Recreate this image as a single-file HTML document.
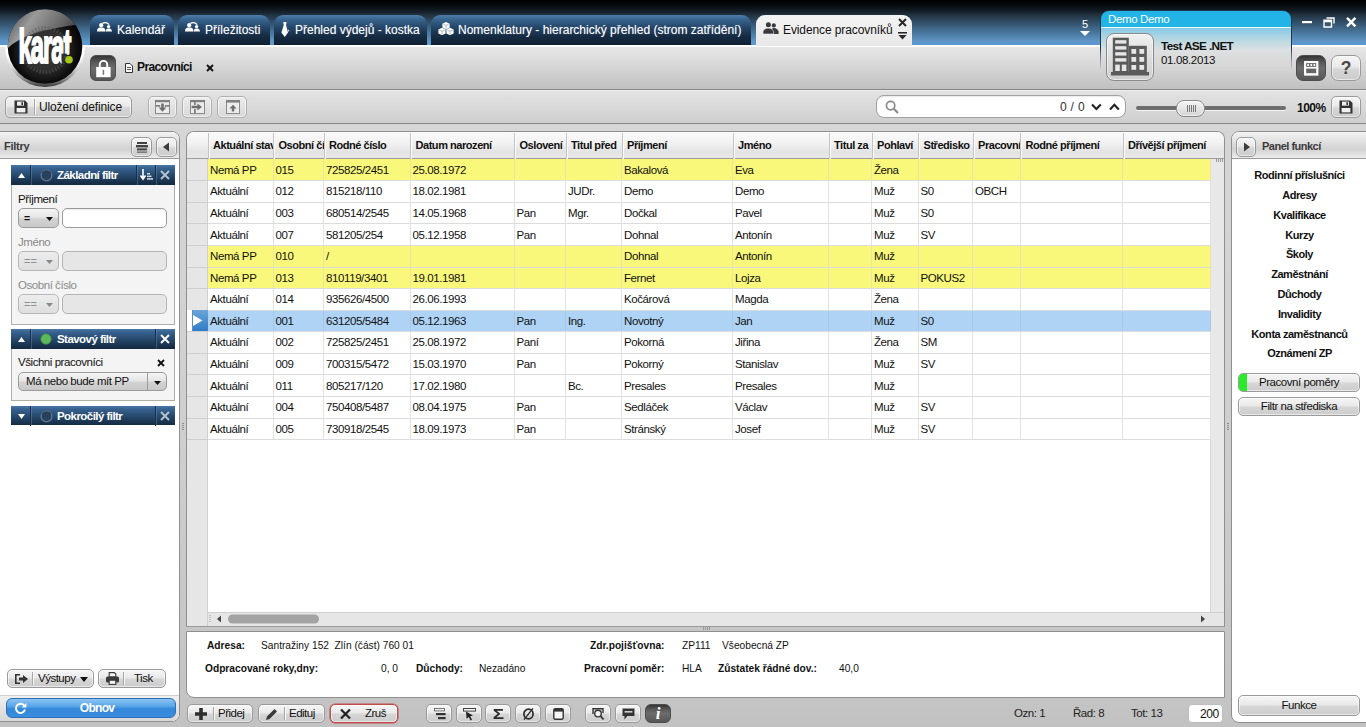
<!DOCTYPE html>
<html lang="cs">
<head>
<meta charset="utf-8">
<title>Evidence pracovníků</title>
<style>
*{box-sizing:border-box;margin:0;padding:0}
html,body{width:1366px;height:727px;overflow:hidden}
body{position:relative;background:linear-gradient(#d6d6d6 0,#d6d6d6 124px,#cfcfcf 420px,#c4c4c4 700px,#c2c2c2 727px);font-family:"Liberation Sans","DejaVu Sans",sans-serif;font-size:12px;color:#111}
.abs{position:absolute}
svg{display:block}
/* ---------- top bar ---------- */
#topbar{left:0;top:0;width:1366px;height:45px;background:linear-gradient(#000 0,#05080b 4px,#0c1218 8px,#17222d 12px,#22323f 15px,#2f4a62 21px,#3f6585 28px,#4f7fa8 35px,#5f95c5 41px,#5b98d2 45px)}
.tab{top:15px;height:30px;border-radius:9px 9px 0 0;background:linear-gradient(#4d7dab 0,#3a6690 4px,#25476a 12px,#162c44 21px,#0f1f31 30px);color:#fff;font-size:12px;line-height:31px;white-space:nowrap;text-shadow:0 0 1px rgba(255,255,255,.35)}
.tab span{position:absolute;top:0}
.tab svg{position:absolute}
.tab.act{background:linear-gradient(#f4f4f4,#e8e8e8);color:#111;text-shadow:none;height:31px}
/* ---------- header row ---------- */
#hdr{left:0;top:45px;width:1366px;height:45px;background:linear-gradient(#fff 0,#fff 1.5px,#e6e6e6 2.5px,#dcdcdc 16px,#cacaca 34px,#c0c0c0 44px);border-bottom:1px solid #868686}
#tool{left:0;top:90px;width:1366px;height:34px;background:linear-gradient(#f6f6f6 0,#e2e2e2 1.5px,#dadada 16px,#cecece 33px);border-bottom:1px solid #888}
.btn{border:1px solid #9a9a9a;border-radius:5px;background:linear-gradient(#f6f6f6 0,#e9e9e9 45%,#d6d6d6 55%,#cccccc 100%);box-shadow:inset 0 0 0 1px rgba(255,255,255,.55)}
.btn.dis{border-color:#b0b0b0;background:linear-gradient(#ececec 0,#e2e2e2 50%,#d8d8d8 100%)}
.btn .sep{position:absolute;top:2px;bottom:2px;width:1px;background:#a8a8a8;box-shadow:1px 0 0 #f8f8f8}
.btn .lbl{position:absolute;top:0;white-space:nowrap}
.btn svg{position:absolute}
.dark{border:1px solid #4c4c4c;border-radius:6px;background:linear-gradient(#343434 0,#585858 25%,#6c6c6c 50%,#565656 100%)}
/* ---------- panels ---------- */
.panel{background:#fff;border:1px solid #8f8f8f;overflow:hidden}
.phead{left:0;top:0;right:0;height:27px;background:linear-gradient(#f3f3f3 0,#e4e4e4 8px,#d2d2d2 17px,#e0e0e0 22px,#ededed 26px);border-bottom:1px solid #9a9a9a;color:#3c3c3c;font-weight:bold;font-size:11px;letter-spacing:-.5px;line-height:29px}
/* grid */
#grid{left:186px;top:131px;width:1039px;height:496px;border-radius:8px 8px 0 0;border-bottom-color:#9a9a9a}
.ghead{background:linear-gradient(#fafafa 0,#f1f1f1 12px,#e3e3e3 20px,#e9e9e9 27px);border-bottom:1px solid #9c9c9c}
.gind{background:#e6e6e6;border-right:1px solid #d0d0d0}
.gvs{background:#e8e8e8;border-left:1px solid #d4d4d4}
.ghs{background:#e6e6e6;border-top:1px solid #cfcfcf}
.hc{top:0;height:27px;line-height:26px;padding-left:5px;font-weight:bold;font-size:11px;letter-spacing:-.45px;white-space:nowrap;overflow:hidden;color:#111}
.hsep{top:1px;width:1px;height:26px;background:#c4c4c4;box-shadow:1px 0 0 #fbfbfb}
.row{left:21px;width:1002.5px;border-bottom:1px solid #dcdcdc;font-size:11.5px;letter-spacing:-.4px;background:#fff}
.row.ry{background:#faf87a}
.row.rs{background:#aed3f5}
.row .c{position:absolute;top:0;bottom:0;padding-left:2px;border-right:1px solid #e2e2e2;white-space:nowrap;overflow:hidden}
.row.ry .c{border-right-color:#e8e6a0}
.row.rs .c{border-right-color:#a6c8e8}
.indl{left:0;width:21px;height:1px;background:#cfcfcf}

/* left panel */
#left{left:-1px;top:131px;width:181px;height:591px;border-radius:0 8px 8px 0}
.fh{left:11px;width:164px;height:20px;background:linear-gradient(#4a78a6 0,#386290 3px,#274a6e 10px,#1a3450 16px,#16293f 20px);color:#fff;font-weight:bold;font-size:11.5px;letter-spacing:-.55px;line-height:20px;white-space:nowrap}
.fh i{position:absolute;top:0;width:1px;height:20px;background:#1a2e45;box-shadow:1px 0 0 rgba(120,160,200,.35)}
.fh span{position:absolute;left:46px;top:0}
.fh svg{position:absolute}
.fb{left:11px;width:164px;background:#f4f4f4;border:1px solid #aeaeae;border-top:0}
.fl{left:18px;font-size:11.5px;letter-spacing:-.45px;white-space:nowrap;line-height:14px}
.fl.g{color:#8a8a8a}
.inp{border:1px solid #9b9b9b;border-radius:5px;background:#fff;box-shadow:inset 0 1px 1px rgba(0,0,0,.08)}
.inp.dis{background:#e6e6e6;border-color:#b4b4b4;box-shadow:none}
.cmb{border:1px solid #9b9b9b;border-radius:5px;background:linear-gradient(#f4f4f4 0,#e6e6e6 45%,#d2d2d2 55%,#c9c9c9 100%);font-size:11px;line-height:18px}
.cmb.dis{border-color:#b8b8b8;background:linear-gradient(#ededed,#dedede);color:#909090}

/* right panel */
#right{left:1231px;top:131px;width:137px;height:592px;border-radius:8px 0 0 8px}
.rl{left:0;width:135px;text-align:center;font-weight:bold;font-size:11px;letter-spacing:-.45px;line-height:16px;white-space:nowrap}
.rb{left:6px;width:122px;text-align:center;font-size:11.5px;letter-spacing:-.45px;line-height:17px;white-space:nowrap}
/* detail */
#detail{left:186px;top:631px;width:1039px;height:67px;border-radius:0 0 0 8px;font-size:10.2px;white-space:nowrap}
#detail b,#detail span{position:absolute;line-height:14px}
/* bottom */
.bb{top:704px;height:19px;font-size:11.5px;letter-spacing:-.5px}
.bb .lbl{line-height:17px}
.st{top:704px;line-height:19px;font-size:11.5px;letter-spacing:-.45px;white-space:nowrap;color:#222}
</style>
</head>
<body>
<!-- ================= TOP BAR ================= -->
<div id="topbar" class="abs"></div>
<div id="hdr" class="abs"></div>
<div id="tool" class="abs"></div>

<!-- tabs -->
<div class="abs tab" style="left:90px;width:84px"><svg style="left:7px;top:7px" width="15" height="10" viewBox="0 0 15 10"><g fill="#fff"><circle cx="4.2" cy="3.2" r="2.1"/><path d="M0 9.6 Q0 6.2 2.6 5.6 H5.8 Q8.4 6.2 8.4 9.6Z"/><circle cx="11.6" cy="4.6" r="1.7"/><path d="M8.6 9.6 Q8.8 7 10.4 6.6 H12.8 Q14.8 7 15 9.6Z"/></g><path d="M5.4 1.4 Q9.6 -0.6 12.2 2.6" stroke="#fff" stroke-width="1.3" fill="none"/></svg><span style="left:27px">Kalendář</span></div>
<div class="abs tab" style="left:178px;width:92px"><svg style="left:7px;top:7px" width="15" height="10" viewBox="0 0 15 10"><g fill="#fff"><circle cx="4.2" cy="3.2" r="2.1"/><path d="M0 9.6 Q0 6.2 2.6 5.6 H5.8 Q8.4 6.2 8.4 9.6Z"/><circle cx="11.6" cy="4.6" r="1.7"/><path d="M8.6 9.6 Q8.8 7 10.4 6.6 H12.8 Q14.8 7 15 9.6Z"/></g><path d="M5.4 1.4 Q9.6 -0.6 12.2 2.6" stroke="#fff" stroke-width="1.3" fill="none"/></svg><span style="left:27px">Příležitosti</span></div>
<div class="abs tab" style="left:274px;width:153px"><svg style="left:7px;top:7px" width="9" height="15" viewBox="0 0 9 15"><path d="M2.2 0 H5.6 L5 3 L7 10.6 L3.8 15 L0.4 10.6 L2.8 3Z" fill="#fff"/><path d="M6.4 6.4 L8.6 9 L7.4 9.8Z" fill="#dfe6ee"/></svg><span style="left:21px">Přehled výdejů - kostka</span></div>
<div class="abs tab" style="left:431px;width:320px"><svg style="left:7px;top:7px" width="16" height="13" viewBox="0 0 16 13"><g fill="#fff"><path d="M8 0 L11.6 1.8 V5.6 L8 7.4 L4.4 5.6 V1.8Z"/><path d="M4 5.8 L7.6 7.6 V11.4 L4 13.2 L0.4 11.4 V7.6Z"/><path d="M12 5.8 L15.6 7.6 V11.4 L12 13.2 L8.4 11.4 V7.6Z"/></g><g stroke="#8a9db2" stroke-width=".7" fill="none"><path d="M8 3.4 V6.4 M5.6 2.4 L8 3.4 L10.4 2.4"/><path d="M4 9.2 V12.4 M1.4 8.2 L4 9.2 L6.6 8.2"/><path d="M12 9.2 V12.4 M9.4 8.2 L12 9.2 L14.6 8.2"/></g></svg><span style="left:27px">Nomenklatury - hierarchický přehled (strom zatřídění)</span></div>
<div class="abs tab act" style="left:756px;width:156px"><svg style="left:7px;top:7px" width="16" height="12" viewBox="0 0 16 12"><g fill="#3a3a3a"><circle cx="10.8" cy="3.4" r="2.1"/><path d="M8.6 12 V8 Q9 6.4 10 6 H12 Q15.2 7 15.6 9.6 V12Z"/><circle cx="5.4" cy="2.8" r="2.5"/><path d="M0 12 V9.6 Q0.4 7.2 3.6 6.2 H7.2 Q10 7.2 10.6 9.6 V12Z" stroke="#ececec" stroke-width=".6"/></g></svg><span style="left:27px;letter-spacing:-.1px">Evidence pracovníků</span>
<svg style="left:142px;top:3px" width="9" height="9" viewBox="0 0 9 9"><path d="M1 1 L8 8 M8 1 L1 8" stroke="#2a2a2a" stroke-width="2"/></svg>
<svg style="left:142px;top:17px" width="9" height="8" viewBox="0 0 9 8"><path d="M0 0.8 H9" stroke="#2a2a2a" stroke-width="1.6"/><path d="M0.4 3 H8.6 L4.5 7.6Z" fill="#2a2a2a"/></svg></div>

<!-- tab counter -->
<div class="abs" style="left:1081px;top:17px;width:8px;color:#fff;font-size:11px;line-height:14px;text-align:center">5</div>
<svg class="abs" style="left:1080px;top:31px" width="10" height="5" viewBox="0 0 10 5"><path d="M0 0 H10 L5 5Z" fill="#fff"/></svg>

<!-- user box -->
<div class="abs" style="left:1100px;top:10px;width:192px;height:60px;border-radius:9px 9px 0 0;border:1px solid #22374c;border-bottom:0;background:linear-gradient(#22b3e7 0,#22b3e7 16px,#f4fbff 16px,#f4fbff 17px,#86c9e6 17px,#a5d2e4 24px,#c4dbe2 32px,#dcdfe0 40px,#d6d6d6 50px,#d0d0d0 60px);-webkit-mask-image:linear-gradient(#000 0,#000 38px,rgba(0,0,0,.0) 60px);mask-image:linear-gradient(#000 0,#000 38px,rgba(0,0,0,0) 60px)"></div>
<div class="abs" style="left:1108px;top:12px;color:#fff;font-size:11.5px;line-height:15px;white-space:nowrap;letter-spacing:-.35px">Demo Demo</div>
<div class="abs btn" style="left:1106px;top:33px;width:48px;height:48px;border-radius:8px;border-color:#8a8a8a;background:linear-gradient(#f0f0f0,#dcdcdc 55%,#cecece)"><svg style="left:4px;top:4px;overflow:visible" width="38" height="38" viewBox="0 0 38 38"><g fill="#5a5a5a"><path d="M1.8 -0.3 H17.8 V34 H1.8Z"/><path d="M17.8 7.8 H35.8 V34 H17.8Z"/><rect x="0" y="34" width="38" height="3.5"/></g><g fill="#e6e6e6"><rect x="4.2" y="2.2" width="11.2" height="3.4"/><rect x="4.2" y="8.2" width="11.2" height="3.4"/><rect x="4.2" y="14.2" width="11.2" height="3.4"/><rect x="4.2" y="20.2" width="11.2" height="3.4"/><rect x="4.2" y="26.6" width="4.6" height="6.4"/><rect x="10.8" y="26.6" width="4.6" height="6.4"/><rect x="20.4" y="11" width="4.8" height="4.8"/><rect x="28.4" y="11" width="4.8" height="4.8"/><rect x="20.4" y="19" width="4.8" height="4.8"/><rect x="28.4" y="19" width="4.8" height="4.8"/><rect x="20.4" y="27" width="4.8" height="4.8"/><rect x="28.4" y="27" width="4.8" height="4.8"/></g></svg></div>
<div class="abs" style="left:1161px;top:39px;font-weight:bold;font-size:11.8px;line-height:15px;white-space:nowrap;letter-spacing:-.65px;color:#111">Test ASE .NET</div>
<div class="abs" style="left:1161px;top:53px;font-size:11.5px;line-height:15px;white-space:nowrap;letter-spacing:-.35px;color:#111">01.08.2013</div>

<!-- window controls -->
<svg class="abs" style="left:1300px;top:15px" width="60" height="14" viewBox="0 0 60 14"><rect x="2" y="6" width="10" height="2.2" fill="#fff"/><path d="M26.5 3 H34 V8.5" stroke="#fff" stroke-width="1.4" fill="none"/><path d="M24 5.2 H31.5 V12 H24Z M24 6.6 H31.5" stroke="#fff" stroke-width="1.4" fill="none"/><path d="M47 2.8 L55.4 11.4 M55.4 2.8 L47 11.4" stroke="#fff" stroke-width="2.4"/></svg>

<!-- header right buttons -->
<div class="abs dark" style="left:1296px;top:55px;width:30px;height:26px;border-radius:7px"><svg class="abs" style="left:7px;top:5px" width="15" height="15" viewBox="0 0 15 15"><rect x="0" y="0" width="14.4" height="14.6" fill="#fff"/><rect x="2.2" y="2.2" width="10" height="3.6" fill="#555"/><g fill="#fff"><rect x="3.2" y="3.1" width="1.9" height="1.9"/><rect x="6.3" y="3.1" width="1.9" height="1.9"/><rect x="9.4" y="3.1" width="1.9" height="1.9"/></g><rect x="2.2" y="7.6" width="10" height="4.6" fill="#666"/></svg></div>
<div class="abs btn" style="left:1331px;top:55px;width:30px;height:26px;border-radius:7px;text-align:center;font-weight:bold;font-size:17.5px;line-height:24px;color:#484848">?</div>

<!-- logo -->
<div class="abs" style="left:4px;top:45px;width:82px;height:44px;overflow:hidden"><div class="abs" style="left:1px;top:-39px;width:80px;height:81px;border-radius:50%;background:linear-gradient(#fff 0,#fff 62%,#d8d8d8 76%,#8a8a8a 90%,#3a3a3a 100%)"></div></div>
<svg class="abs" style="left:7px;top:9px" width="78" height="78" viewBox="0 0 78 78">
<defs>
<radialGradient id="lg1" cx="50%" cy="55%" r="55%"><stop offset="0" stop-color="#4a4a4a"/><stop offset=".5" stop-color="#2a2a2a"/><stop offset=".8" stop-color="#0c0c0c"/><stop offset="1" stop-color="#000"/></radialGradient>
<linearGradient id="lg2" x1="0" y1="0" x2="1" y2="0.4"><stop offset="0" stop-color="#2c2c2c"/><stop offset=".4" stop-color="#a2a2a2"/><stop offset=".75" stop-color="#6a6a6a"/><stop offset="1" stop-color="#2e2e2e"/></linearGradient>
<clipPath id="lc"><circle cx="38" cy="37.5" r="37.3"/></clipPath>
</defs>
<circle cx="38" cy="37.5" r="37.3" fill="url(#lg1)"/>
<g clip-path="url(#lc)"><path d="M-2 42 Q14 22 76 15 L80 -4 L-4 -4Z" fill="url(#lg2)" opacity=".95"/>
<circle cx="38" cy="41" r="22" fill="none" stroke="#5c5c5c" stroke-width="4" stroke-dasharray="1.6 1.6" opacity=".5"/><circle cx="38" cy="41" r="20" fill="#333" opacity=".5"/><circle cx="38" cy="41" r="11" fill="#222" opacity=".5"/></g>
<clipPath id="tc"><path d="M0 0 H54.5 V80 H0Z M54.5 0 H78 V44.6 H54.5Z"/></clipPath>
<g clip-path="url(#tc)"><text x="0" y="0" transform="translate(11.6,54) scale(0.5,1)" font-family="Liberation Sans, sans-serif" font-weight="bold" font-size="47.5" letter-spacing="-2" fill="#fff" stroke="#fff" stroke-width="2">karat</text></g>
<text x="0" y="0" transform="translate(58,54.2) scale(0.38,0.76)" font-family="Liberation Sans, sans-serif" font-weight="bold" font-size="48" fill="#fff">!</text>
<circle cx="62" cy="50.8" r="3.8" fill="#a5c715"/>
</svg>

<!-- lock + doc tab -->
<div class="abs dark" style="left:90px;top:55px;width:26px;height:26px"><svg class="abs" style="left:5px;top:3px" width="15" height="19" viewBox="0 0 15 19"><path d="M3.8 9 V5.6 A3.7 3.7 0 0 1 11.2 5.6 V9" stroke="#fff" stroke-width="1.9" fill="none"/><rect x="0.2" y="8" width="14.4" height="10.2" fill="#fff"/><path d="M7.4 10.8 V15.8" stroke="#7a7a7a" stroke-width="1.6"/></svg></div>
<svg class="abs" style="left:125px;top:63px" width="8" height="10" viewBox="0 0 8 10"><path d="M0.5 0.5 H5 L7.5 3 V9.5 H0.5Z" fill="#f6f6f6" stroke="#333" stroke-width="1"/><path d="M2 4.5 H6 M2 6.5 H6" stroke="#333" stroke-width=".8"/></svg>
<div class="abs" style="left:137px;top:60px;font-weight:bold;font-size:12px;letter-spacing:-.6px;line-height:15px;color:#111;white-space:nowrap">Pracovníci</div>
<svg class="abs" style="left:206px;top:64px" width="8" height="8" viewBox="0 0 8 8"><path d="M1 1 L7 7 M7 1 L1 7" stroke="#111" stroke-width="1.9"/></svg>

<!-- toolbar -->
<div class="abs btn" style="left:5px;top:96px;width:127px;height:22px"><svg style="left:8px;top:3px" width="14" height="14" viewBox="0 0 14 14"><path d="M0.5 0.5 H11 L13.5 3 V13.5 H0.5Z" fill="#333"/><rect x="3" y="1.6" width="7" height="4" fill="#f0f0f0"/><rect x="7.4" y="2.2" width="1.6" height="2.8" fill="#333"/><rect x="2.6" y="8" width="8.8" height="4.4" fill="#f0f0f0"/></svg><i class="sep" style="left:28px"></i><span class="lbl" style="left:33px;line-height:20px;letter-spacing:-.15px">Uložení definice</span></div>
<div class="abs btn dis" style="left:148px;top:96px;width:29px;height:22px"><svg style="left:6px;top:3px" width="15" height="14" viewBox="0 0 15 14"><rect x="0.5" y="0.5" width="14" height="13" fill="#ececec" stroke="#8a8a8a"/><rect x="0" y="0" width="15" height="2.2" fill="#808080"/><path d="M1 5 H5.2 V6.8 H1Z M9.8 5 H14 V6.8 H9.8Z" fill="#808080"/><path d="M6.2 3.4 H8.8 V7.6 H11.4 L7.5 11.8 L3.6 7.6 H6.2Z" fill="#6e6e6e"/></svg></div>
<div class="abs btn dis" style="left:182px;top:96px;width:30px;height:22px"><svg style="left:7px;top:3px" width="15" height="14" viewBox="0 0 15 14"><rect x="0.5" y="0.5" width="14" height="13" fill="#ececec" stroke="#8a8a8a"/><rect x="0" y="0" width="15" height="2.2" fill="#808080"/><path d="M4 2 H5.8 V5 H4Z M4 9 H5.8 V13 H4Z" fill="#808080"/><path d="M1.6 5.8 H7.4 V3.4 L12 7 L7.4 10.6 V8.2 H1.6Z" fill="#6e6e6e"/></svg></div>
<div class="abs btn dis" style="left:217px;top:96px;width:30px;height:22px"><svg style="left:7.5px;top:3px" width="14" height="14" viewBox="0 0 14 14"><rect x="0.5" y="0.5" width="13" height="13" fill="#ececec" stroke="#8a8a8a"/><rect x="0" y="0" width="14" height="2.6" fill="#808080"/><path d="M5.8 11.6 H8.2 V8.4 H10.6 L7 4.8 L3.4 8.4 H5.8Z" fill="#6e6e6e"/></svg></div>

<div class="abs inp" style="left:876px;top:95px;width:250px;height:23px;border-radius:8px;border-color:#a2a2a2"><svg class="abs" style="left:8px;top:4px" width="14" height="14" viewBox="0 0 14 14"><circle cx="5.6" cy="5.6" r="4.2" stroke="#8a8a8a" stroke-width="1.7" fill="none"/><path d="M8.8 8.8 L13 13" stroke="#8a8a8a" stroke-width="2.2"/></svg><span class="abs" style="left:183px;top:1px;line-height:21px;font-size:12px;color:#333;white-space:nowrap;letter-spacing:.3px">0 / 0</span><svg class="abs" style="left:214px;top:7px" width="30" height="8" viewBox="0 0 30 8"><path d="M1 1.4 L5.4 6 L9.8 1.4" stroke="#222" stroke-width="2.1" fill="none"/><path d="M19 6.4 L23.4 1.8 L27.8 6.4" stroke="#222" stroke-width="2.1" fill="none"/></svg></div>
<div class="abs" style="left:1136px;top:106px;width:150px;height:4px;border-radius:2px;background:#6e6e6e;box-shadow:0 1px 0 #f4f4f4"></div>
<div class="abs btn" style="left:1176px;top:100px;width:29px;height:17px;border-radius:8px;border-color:#8a8a8a;background:linear-gradient(#f6f6f6,#d4d4d4)"><svg style="left:9px;top:4px" width="10" height="7" viewBox="0 0 10 7"><path d="M1.5 0 V7 M3.5 0 V7 M5.5 0 V7 M7.5 0 V7 M9.5 0 V7" stroke="#777" stroke-width="1" shape-rendering="crispEdges"/></svg></div>
<div class="abs" style="left:1297px;top:100.5px;font-weight:bold;font-size:12px;letter-spacing:-.5px;line-height:15px;color:#111">100%</div>
<div class="abs btn" style="left:1331px;top:96px;width:30px;height:22px"><svg style="left:7px;top:3px" width="14" height="14" viewBox="0 0 14 14"><path d="M0.5 0.5 H11 L13.5 3 V13.5 H0.5Z" fill="#333"/><rect x="3" y="1.6" width="7" height="4" fill="#f0f0f0"/><rect x="7.4" y="2.2" width="1.6" height="2.8" fill="#333"/><rect x="2.6" y="8" width="8.8" height="4.4" fill="#f0f0f0"/></svg></div>
<!-- ================= LEFT PANEL ================= -->
<div id="left" class="abs panel">
<div class="abs phead"><span class="abs" style="left:4px;top:0;letter-spacing:-.25px">Filtry</span></div>
<div class="abs btn" style="left:131px;top:5px;width:21px;height:20px"><svg style="left:4px;top:4px" width="12" height="11" viewBox="0 0 12 11"><g fill="#444"><rect x="1" y="0" width="10" height="2"/><rect x="0" y="3" width="12" height="2.4"/><rect x="1" y="6.4" width="10" height="2"/><rect x="1" y="9.6" width="10" height="1"/></g></svg></div>
<div class="abs btn" style="left:156px;top:5px;width:21px;height:20px"><svg style="left:5px;top:4px" width="8" height="10" viewBox="0 0 8 10"><path d="M7 0.5 L7 9.5 L1 5Z" fill="#3c3c3c"/></svg></div>

<div class="abs" style="left:0;top:-1px;width:0;height:0">
<!-- Základní filtr -->
<div class="abs fh" style="top:34px"><svg style="left:6.5px;top:7.5px" width="7" height="5" viewBox="0 0 7 5"><path d="M0 5 L3.5 0 L7 5Z" fill="#fff"/></svg><i style="left:19px"></i>
<svg style="left:28.5px;top:3.5px" width="13" height="13" viewBox="0 0 13 13"><circle cx="6.5" cy="6.5" r="5.4" fill="#27425f" stroke="#62778d" stroke-width="1.3"/><path d="M2 4.4 A5.4 5.4 0 0 1 11 4.4" stroke="#2a3f56" stroke-width="1.4" fill="none"/></svg>
<span>Základní filtr</span><i style="left:125px"></i>
<svg style="left:129px;top:4px" width="13" height="12" viewBox="0 0 13 12"><path d="M3 0 V9 M0.5 6.5 L3 10 L5.5 6.5" stroke="#fff" stroke-width="1.6" fill="none"/><g fill="#cfd8e2"><rect x="7" y="4" width="3" height="1.5"/><rect x="7" y="6.6" width="4.5" height="1.5"/><rect x="7" y="9.2" width="6" height="1.5"/></g></svg>
<i style="left:144px"></i>
<svg style="left:149px;top:5px" width="10" height="10" viewBox="0 0 10 10"><path d="M1 1 L9 9 M9 1 L1 9" stroke="#b8c4d0" stroke-width="1.8"/></svg></div>
<div class="abs fb" style="top:54px;height:140px"></div>
<div class="abs fl" style="top:61px">Příjmení</div>
<div class="abs cmb" style="left:18px;top:77px;width:41px;height:20px"><span class="abs" style="left:5px;top:0;font-weight:bold;font-size:10.5px">=</span><svg class="abs" style="left:27px;top:7.5px" width="7" height="4" viewBox="0 0 7 4"><path d="M0 0 H7 L3.5 4Z" fill="#111"/></svg></div>
<div class="abs inp" style="left:62px;top:77px;width:105px;height:20px"></div>
<div class="abs fl g" style="top:104px">Jméno</div>
<div class="abs cmb dis" style="left:18px;top:120px;width:41px;height:20px"><span class="abs" style="left:5px;top:0">==</span><svg class="abs" style="left:27px;top:7.5px" width="7" height="4" viewBox="0 0 7 4"><path d="M0 0 H7 L3.5 4Z" fill="#8a8a8a"/></svg></div>
<div class="abs inp dis" style="left:62px;top:120px;width:105px;height:20px"></div>
<div class="abs fl g" style="top:147px">Osobní číslo</div>
<div class="abs cmb dis" style="left:18px;top:163px;width:41px;height:20px"><span class="abs" style="left:5px;top:0">==</span><svg class="abs" style="left:27px;top:7.5px" width="7" height="4" viewBox="0 0 7 4"><path d="M0 0 H7 L3.5 4Z" fill="#8a8a8a"/></svg></div>
<div class="abs inp dis" style="left:62px;top:163px;width:105px;height:20px"></div>

<!-- Stavový filtr -->
<div class="abs fh" style="top:198px"><svg style="left:6.5px;top:7.5px" width="7" height="5" viewBox="0 0 7 5"><path d="M0 5 L3.5 0 L7 5Z" fill="#fff"/></svg><i style="left:19px"></i>
<svg style="left:29px;top:4px" width="12" height="12" viewBox="0 0 12 12"><circle cx="6" cy="6" r="5.2" fill="#5cb85a" stroke="#3f8f46" stroke-width=".8"/></svg>
<span>Stavový filtr</span><i style="left:144px"></i>
<svg style="left:149px;top:5px" width="10" height="10" viewBox="0 0 10 10"><path d="M1 1 L9 9 M9 1 L1 9" stroke="#fff" stroke-width="1.9"/></svg></div>
<div class="abs fb" style="top:218px;height:52px"></div>
<div class="abs fl" style="top:224px">Všichni pracovníci</div>
<svg class="abs" style="left:157px;top:228px" width="8" height="8" viewBox="0 0 8 8"><path d="M1 1 L7 7 M7 1 L1 7" stroke="#111" stroke-width="1.8"/></svg>
<div class="abs cmb" style="left:18px;top:241px;width:149px;height:19px;font-size:11.5px;letter-spacing:-.45px;line-height:17px"><span class="abs" style="left:7px;top:0;white-space:nowrap">Má nebo bude mít PP</span><i class="abs" style="left:128px;top:0;width:1px;height:17px;background:#9b9b9b"></i><svg class="abs" style="left:134.5px;top:7.5px" width="7" height="4" viewBox="0 0 7 4"><path d="M0 0 H7 L3.5 4Z" fill="#111"/></svg></div>

<!-- Pokročilý filtr -->
<div class="abs fh" style="top:275px;height:19px"><svg style="left:6.5px;top:7.5px" width="7" height="5" viewBox="0 0 7 5"><path d="M0 0 L3.5 5 L7 0Z" fill="#fff"/></svg><i style="left:19px"></i>
<svg style="left:28.5px;top:3.5px" width="13" height="13" viewBox="0 0 13 13"><circle cx="6.5" cy="6.5" r="5.4" fill="#27425f" stroke="#62778d" stroke-width="1.3"/><path d="M2 4.4 A5.4 5.4 0 0 1 11 4.4" stroke="#2a3f56" stroke-width="1.4" fill="none"/></svg>
<span>Pokročilý filtr</span><i style="left:144px"></i>
<svg style="left:149px;top:5px" width="10" height="10" viewBox="0 0 10 10"><path d="M1 1 L9 9 M9 1 L1 9" stroke="#b8c4d0" stroke-width="1.8"/></svg></div>

</div>
<!-- bottom buttons -->
<div class="abs" style="left:0;top:563px;width:180px;height:28px;background:linear-gradient(#f0f0f0,#e2e2e2 50%,#d6d6d6);border-top:1px solid #d0d0d0"></div>
<div class="abs btn" style="left:7px;top:537px;width:87px;height:19px"><svg style="left:7px;top:4px" width="13" height="10" viewBox="0 0 13 10"><path d="M5 0.8 H0.8 V9.2 H5" stroke="#333" stroke-width="1.6" fill="none"/><path d="M4 3.5 H8 V1 L13 5 L8 9 V6.5 H4Z" fill="#333"/></svg><i class="sep" style="left:24px"></i><span class="lbl" style="left:30px;line-height:17px;font-size:11.5px;letter-spacing:-.5px">Výstupy</span><svg style="left:72px;top:7px" width="8" height="5" viewBox="0 0 8 5"><path d="M0 0 H8 L4 5Z" fill="#111"/></svg></div>
<div class="abs btn" style="left:98px;top:537px;width:68px;height:19px"><svg style="left:7px;top:2px" width="13" height="13" viewBox="0 0 13 13"><path d="M3.2 0.6 H8.4 L9.8 2 V5 H3.2Z" fill="#f4f4f4" stroke="#3a3a3a" stroke-width="1.1"/><rect x="0" y="4.4" width="13" height="6.2" rx="1.6" fill="#3a3a3a"/><rect x="3.2" y="8.2" width="6.6" height="4.2" fill="#f4f4f4" stroke="#3a3a3a" stroke-width="1.1"/></svg><i class="sep" style="left:24px"></i><span class="lbl" style="left:35px;line-height:17px;font-size:11.5px;letter-spacing:-.5px">Tisk</span></div>
<div class="abs" style="left:6px;top:566px;width:170px;height:20px;border:1px solid #2a6fb8;border-radius:6px;background:linear-gradient(#8cc4f2 0,#5aa6e8 40%,#3488da 55%,#3a8cdc 100%);color:#fff;font-weight:bold;font-size:12px;letter-spacing:-.7px;line-height:18px;text-align:center;padding-left:12px"><svg class="abs" style="left:7px;top:3px" width="13" height="13" viewBox="0 0 13 13"><path d="M10.6 4.2 A4.6 4.6 0 1 0 11 7.6" stroke="#fff" stroke-width="2" fill="none"/><path d="M12.4 1 V5.6 H7.8Z" fill="#fff"/></svg>Obnov</div>
</div>
<!-- ================= GRID ================= -->
<div id="grid" class="abs panel">
<div class="abs ghead" style="left:0;top:0;width:1037px;height:27px"></div>
<div class="abs gind" style="left:0;top:27px;width:21px;height:467px"></div>
<div class="abs gvs" style="left:1023px;top:27px;width:14px;height:453px"></div>
<div class="abs ghs" style="left:21px;top:480px;width:1016px;height:14px"></div>
<div class="abs hsep" style="left:21px"></div>
<div class="abs hc" style="left:21px;width:65.5px">Aktuální stav</div>
<div class="abs hsep" style="left:86px"></div>
<div class="abs hc" style="left:86.5px;width:50.5px">Osobní čís</div>
<div class="abs hsep" style="left:136.5px"></div>
<div class="abs hc" style="left:137px;width:86.5px">Rodné číslo</div>
<div class="abs hsep" style="left:223px"></div>
<div class="abs hc" style="left:223.5px;width:104px">Datum narození</div>
<div class="abs hsep" style="left:327px"></div>
<div class="abs hc" style="left:327.5px;width:51.5px">Oslovení</div>
<div class="abs hsep" style="left:378.5px"></div>
<div class="abs hc" style="left:379px;width:56px">Titul před</div>
<div class="abs hsep" style="left:434.5px"></div>
<div class="abs hc" style="left:435px;width:111px">Příjmení</div>
<div class="abs hsep" style="left:545.5px"></div>
<div class="abs hc" style="left:546px;width:96px">Jméno</div>
<div class="abs hsep" style="left:641.5px"></div>
<div class="abs hc" style="left:642px;width:43px">Titul za</div>
<div class="abs hsep" style="left:684.5px"></div>
<div class="abs hc" style="left:685px;width:46.5px">Pohlaví</div>
<div class="abs hsep" style="left:731px"></div>
<div class="abs hc" style="left:731.5px;width:54.5px">Středisko</div>
<div class="abs hsep" style="left:785.5px"></div>
<div class="abs hc" style="left:786px;width:47.5px">Pracovní</div>
<div class="abs hsep" style="left:833px"></div>
<div class="abs hc" style="left:833.5px;width:102.5px">Rodné příjmení</div>
<div class="abs hsep" style="left:935.5px"></div>
<div class="abs hc" style="left:936px;width:101px">Dřívější příjmení</div>
<div class="abs row ry" style="top:27px;height:22px;line-height:23px">
<span class="c" style="left:0px;width:65.5px">Nemá PP</span>
<span class="c" style="left:65.5px;width:50.5px">015</span>
<span class="c" style="left:116px;width:86.5px">725825/2451</span>
<span class="c" style="left:202.5px;width:104px">25.08.1972</span>
<span class="c" style="left:306.5px;width:51.5px"></span>
<span class="c" style="left:358px;width:56px"></span>
<span class="c" style="left:414px;width:111px">Bakalová</span>
<span class="c" style="left:525px;width:96px">Eva</span>
<span class="c" style="left:621px;width:43px"></span>
<span class="c" style="left:664px;width:46.5px">Žena</span>
<span class="c" style="left:710.5px;width:54.5px"></span>
<span class="c" style="left:765px;width:47.5px"></span>
<span class="c" style="left:812.5px;width:102.5px"></span>
<span class="c" style="left:915px;width:87.5px"></span>
</div>
<div class="abs indl" style="top:48px"></div>
<div class="abs row" style="top:49px;height:22px;line-height:21px">
<span class="c" style="left:0px;width:65.5px">Aktuální</span>
<span class="c" style="left:65.5px;width:50.5px">012</span>
<span class="c" style="left:116px;width:86.5px">815218/110</span>
<span class="c" style="left:202.5px;width:104px">18.02.1981</span>
<span class="c" style="left:306.5px;width:51.5px"></span>
<span class="c" style="left:358px;width:56px">JUDr.</span>
<span class="c" style="left:414px;width:111px">Demo</span>
<span class="c" style="left:525px;width:96px">Demo</span>
<span class="c" style="left:621px;width:43px"></span>
<span class="c" style="left:664px;width:46.5px">Muž</span>
<span class="c" style="left:710.5px;width:54.5px">S0</span>
<span class="c" style="left:765px;width:47.5px">OBCH</span>
<span class="c" style="left:812.5px;width:102.5px"></span>
<span class="c" style="left:915px;width:87.5px"></span>
</div>
<div class="abs indl" style="top:70px"></div>
<div class="abs row" style="top:71px;height:21px;line-height:21px">
<span class="c" style="left:0px;width:65.5px">Aktuální</span>
<span class="c" style="left:65.5px;width:50.5px">003</span>
<span class="c" style="left:116px;width:86.5px">680514/2545</span>
<span class="c" style="left:202.5px;width:104px">14.05.1968</span>
<span class="c" style="left:306.5px;width:51.5px">Pan</span>
<span class="c" style="left:358px;width:56px">Mgr.</span>
<span class="c" style="left:414px;width:111px">Dočkal</span>
<span class="c" style="left:525px;width:96px">Pavel</span>
<span class="c" style="left:621px;width:43px"></span>
<span class="c" style="left:664px;width:46.5px">Muž</span>
<span class="c" style="left:710.5px;width:54.5px">S0</span>
<span class="c" style="left:765px;width:47.5px"></span>
<span class="c" style="left:812.5px;width:102.5px"></span>
<span class="c" style="left:915px;width:87.5px"></span>
</div>
<div class="abs indl" style="top:91px"></div>
<div class="abs row" style="top:92px;height:22px;line-height:23px">
<span class="c" style="left:0px;width:65.5px">Aktuální</span>
<span class="c" style="left:65.5px;width:50.5px">007</span>
<span class="c" style="left:116px;width:86.5px">581205/254</span>
<span class="c" style="left:202.5px;width:104px">05.12.1958</span>
<span class="c" style="left:306.5px;width:51.5px">Pan</span>
<span class="c" style="left:358px;width:56px"></span>
<span class="c" style="left:414px;width:111px">Dohnal</span>
<span class="c" style="left:525px;width:96px">Antonín</span>
<span class="c" style="left:621px;width:43px"></span>
<span class="c" style="left:664px;width:46.5px">Muž</span>
<span class="c" style="left:710.5px;width:54.5px">SV</span>
<span class="c" style="left:765px;width:47.5px"></span>
<span class="c" style="left:812.5px;width:102.5px"></span>
<span class="c" style="left:915px;width:87.5px"></span>
</div>
<div class="abs indl" style="top:113px"></div>
<div class="abs row ry" style="top:114px;height:22px;line-height:21px">
<span class="c" style="left:0px;width:65.5px">Nemá PP</span>
<span class="c" style="left:65.5px;width:50.5px">010</span>
<span class="c" style="left:116px;width:86.5px">/</span>
<span class="c" style="left:202.5px;width:104px"></span>
<span class="c" style="left:306.5px;width:51.5px"></span>
<span class="c" style="left:358px;width:56px"></span>
<span class="c" style="left:414px;width:111px">Dohnal</span>
<span class="c" style="left:525px;width:96px">Antonín</span>
<span class="c" style="left:621px;width:43px"></span>
<span class="c" style="left:664px;width:46.5px">Muž</span>
<span class="c" style="left:710.5px;width:54.5px"></span>
<span class="c" style="left:765px;width:47.5px"></span>
<span class="c" style="left:812.5px;width:102.5px"></span>
<span class="c" style="left:915px;width:87.5px"></span>
</div>
<div class="abs indl" style="top:135px"></div>
<div class="abs row ry" style="top:136px;height:21px;line-height:21px">
<span class="c" style="left:0px;width:65.5px">Nemá PP</span>
<span class="c" style="left:65.5px;width:50.5px">013</span>
<span class="c" style="left:116px;width:86.5px">810119/3401</span>
<span class="c" style="left:202.5px;width:104px">19.01.1981</span>
<span class="c" style="left:306.5px;width:51.5px"></span>
<span class="c" style="left:358px;width:56px"></span>
<span class="c" style="left:414px;width:111px">Fernet</span>
<span class="c" style="left:525px;width:96px">Lojza</span>
<span class="c" style="left:621px;width:43px"></span>
<span class="c" style="left:664px;width:46.5px">Muž</span>
<span class="c" style="left:710.5px;width:54.5px">POKUS2</span>
<span class="c" style="left:765px;width:47.5px"></span>
<span class="c" style="left:812.5px;width:102.5px"></span>
<span class="c" style="left:915px;width:87.5px"></span>
</div>
<div class="abs indl" style="top:156px"></div>
<div class="abs row" style="top:157px;height:22px;line-height:21px">
<span class="c" style="left:0px;width:65.5px">Aktuální</span>
<span class="c" style="left:65.5px;width:50.5px">014</span>
<span class="c" style="left:116px;width:86.5px">935626/4500</span>
<span class="c" style="left:202.5px;width:104px">26.06.1993</span>
<span class="c" style="left:306.5px;width:51.5px"></span>
<span class="c" style="left:358px;width:56px"></span>
<span class="c" style="left:414px;width:111px">Kočárová</span>
<span class="c" style="left:525px;width:96px">Magda</span>
<span class="c" style="left:621px;width:43px"></span>
<span class="c" style="left:664px;width:46.5px">Žena</span>
<span class="c" style="left:710.5px;width:54.5px"></span>
<span class="c" style="left:765px;width:47.5px"></span>
<span class="c" style="left:812.5px;width:102.5px"></span>
<span class="c" style="left:915px;width:87.5px"></span>
</div>
<div class="abs indl" style="top:178px"></div>
<div class="abs row rs" style="top:179px;height:21px;line-height:21px">
<span class="c" style="left:0px;width:65.5px">Aktuální</span>
<span class="c" style="left:65.5px;width:50.5px">001</span>
<span class="c" style="left:116px;width:86.5px">631205/5484</span>
<span class="c" style="left:202.5px;width:104px">05.12.1963</span>
<span class="c" style="left:306.5px;width:51.5px">Pan</span>
<span class="c" style="left:358px;width:56px">Ing.</span>
<span class="c" style="left:414px;width:111px">Novotný</span>
<span class="c" style="left:525px;width:96px">Jan</span>
<span class="c" style="left:621px;width:43px"></span>
<span class="c" style="left:664px;width:46.5px">Muž</span>
<span class="c" style="left:710.5px;width:54.5px">S0</span>
<span class="c" style="left:765px;width:47.5px"></span>
<span class="c" style="left:812.5px;width:102.5px"></span>
<span class="c" style="left:915px;width:87.5px"></span>
</div>
<div class="abs indl" style="top:199px"></div>
<div class="abs row" style="top:200px;height:22px;line-height:21px">
<span class="c" style="left:0px;width:65.5px">Aktuální</span>
<span class="c" style="left:65.5px;width:50.5px">002</span>
<span class="c" style="left:116px;width:86.5px">725825/2451</span>
<span class="c" style="left:202.5px;width:104px">25.08.1972</span>
<span class="c" style="left:306.5px;width:51.5px">Paní</span>
<span class="c" style="left:358px;width:56px"></span>
<span class="c" style="left:414px;width:111px">Pokorná</span>
<span class="c" style="left:525px;width:96px">Jiřina</span>
<span class="c" style="left:621px;width:43px"></span>
<span class="c" style="left:664px;width:46.5px">Žena</span>
<span class="c" style="left:710.5px;width:54.5px">SM</span>
<span class="c" style="left:765px;width:47.5px"></span>
<span class="c" style="left:812.5px;width:102.5px"></span>
<span class="c" style="left:915px;width:87.5px"></span>
</div>
<div class="abs indl" style="top:221px"></div>
<div class="abs row" style="top:222px;height:21px;line-height:21px">
<span class="c" style="left:0px;width:65.5px">Aktuální</span>
<span class="c" style="left:65.5px;width:50.5px">009</span>
<span class="c" style="left:116px;width:86.5px">700315/5472</span>
<span class="c" style="left:202.5px;width:104px">15.03.1970</span>
<span class="c" style="left:306.5px;width:51.5px">Pan</span>
<span class="c" style="left:358px;width:56px"></span>
<span class="c" style="left:414px;width:111px">Pokorný</span>
<span class="c" style="left:525px;width:96px">Stanislav</span>
<span class="c" style="left:621px;width:43px"></span>
<span class="c" style="left:664px;width:46.5px">Muž</span>
<span class="c" style="left:710.5px;width:54.5px">SV</span>
<span class="c" style="left:765px;width:47.5px"></span>
<span class="c" style="left:812.5px;width:102.5px"></span>
<span class="c" style="left:915px;width:87.5px"></span>
</div>
<div class="abs indl" style="top:242px"></div>
<div class="abs row" style="top:243px;height:22px;line-height:23px">
<span class="c" style="left:0px;width:65.5px">Aktuální</span>
<span class="c" style="left:65.5px;width:50.5px">011</span>
<span class="c" style="left:116px;width:86.5px">805217/120</span>
<span class="c" style="left:202.5px;width:104px">17.02.1980</span>
<span class="c" style="left:306.5px;width:51.5px"></span>
<span class="c" style="left:358px;width:56px">Bc.</span>
<span class="c" style="left:414px;width:111px">Presales</span>
<span class="c" style="left:525px;width:96px">Presales</span>
<span class="c" style="left:621px;width:43px"></span>
<span class="c" style="left:664px;width:46.5px">Muž</span>
<span class="c" style="left:710.5px;width:54.5px"></span>
<span class="c" style="left:765px;width:47.5px"></span>
<span class="c" style="left:812.5px;width:102.5px"></span>
<span class="c" style="left:915px;width:87.5px"></span>
</div>
<div class="abs indl" style="top:264px"></div>
<div class="abs row" style="top:265px;height:22px;line-height:21px">
<span class="c" style="left:0px;width:65.5px">Aktuální</span>
<span class="c" style="left:65.5px;width:50.5px">004</span>
<span class="c" style="left:116px;width:86.5px">750408/5487</span>
<span class="c" style="left:202.5px;width:104px">08.04.1975</span>
<span class="c" style="left:306.5px;width:51.5px">Pan</span>
<span class="c" style="left:358px;width:56px"></span>
<span class="c" style="left:414px;width:111px">Sedláček</span>
<span class="c" style="left:525px;width:96px">Václav</span>
<span class="c" style="left:621px;width:43px"></span>
<span class="c" style="left:664px;width:46.5px">Muž</span>
<span class="c" style="left:710.5px;width:54.5px">SV</span>
<span class="c" style="left:765px;width:47.5px"></span>
<span class="c" style="left:812.5px;width:102.5px"></span>
<span class="c" style="left:915px;width:87.5px"></span>
</div>
<div class="abs indl" style="top:286px"></div>
<div class="abs row" style="top:287px;height:21px;line-height:21px">
<span class="c" style="left:0px;width:65.5px">Aktuální</span>
<span class="c" style="left:65.5px;width:50.5px">005</span>
<span class="c" style="left:116px;width:86.5px">730918/2545</span>
<span class="c" style="left:202.5px;width:104px">18.09.1973</span>
<span class="c" style="left:306.5px;width:51.5px">Pan</span>
<span class="c" style="left:358px;width:56px"></span>
<span class="c" style="left:414px;width:111px">Stránský</span>
<span class="c" style="left:525px;width:96px">Josef</span>
<span class="c" style="left:621px;width:43px"></span>
<span class="c" style="left:664px;width:46.5px">Muž</span>
<span class="c" style="left:710.5px;width:54.5px">SV</span>
<span class="c" style="left:765px;width:47.5px"></span>
<span class="c" style="left:812.5px;width:102.5px"></span>
<span class="c" style="left:915px;width:87.5px"></span>
</div>
<div class="abs indl" style="top:307px"></div>
<div class="abs" style="left:0;top:178px;width:21px;height:21px;background:#fff"></div>
<div class="abs" style="left:5px;top:178px;width:16px;height:21px;background:linear-gradient(#6ba5d9,#2f7cc8);border-left:1px solid #5a8fc4"><svg class="abs" style="left:0;top:5px" width="10" height="11" viewBox="0 0 10 11"><path d="M0 0 L9.5 5.5 L0 11Z" fill="#fff"/></svg></div>
<svg class="abs" style="left:22px;top:481px" width="1014" height="12" viewBox="0 0 1014 12"><g fill="#9a9a9a"><rect x="0.5" y="2" width="1" height="1"/><rect x="0.5" y="4" width="1" height="1"/><rect x="0.5" y="6" width="1" height="1"/><rect x="0.5" y="8" width="1" height="1"/></g><path d="M12 2.5 L12 9.5 L8 6Z" fill="#444"/><rect x="19" y="1.5" width="91" height="9" rx="4.5" fill="#a3a3a3"/><path d="M992 2.5 L992 9.5 L996 6Z" fill="#444"/></svg>
</div>
<!-- ================= DETAIL ================= -->
<div class="abs" style="left:703px;top:627px;width:8px;height:3px;background:repeating-linear-gradient(90deg,#9a9a9a 0 1px,transparent 1px 2px)"></div>
<div id="detail" class="abs panel">
<b style="left:20px;top:6.5px">Adresa:</b><span style="left:74px;top:6.5px">Santražiny 152&nbsp; Zlín (část) 760 01</span>
<b style="left:403px;top:6.5px">Zdr.pojišťovna:</b><span style="left:495px;top:6.5px">ZP111</span><span style="left:535px;top:6.5px">Všeobecná ZP</span>
<b style="left:18px;top:30px">Odpracované roky,dny:</b><span style="left:194px;top:30px">0, 0</span>
<b style="left:229px;top:30px">Důchody:</b><span style="left:292px;top:30px">Nezadáno</span>
<b style="left:397px;top:30px">Pracovní poměr:</b><span style="left:495px;top:30px">HLA</span>
<b style="left:531px;top:30px">Zůstatek řádné dov.:</b><span style="left:652px;top:30px">40,0</span>
</div>
<div class="abs" style="left:182px;top:423px;width:2px;height:8px;background:repeating-linear-gradient(180deg,#8e8e8e 0 1px,transparent 1px 2px)"></div>
<div class="abs" style="left:1227px;top:423px;width:2px;height:8px;background:repeating-linear-gradient(180deg,#8e8e8e 0 1px,transparent 1px 2px)"></div>
<div class="abs" style="left:1216px;top:159px;width:8px;height:3px;background:repeating-linear-gradient(90deg,#9a9a9a 0 1px,transparent 1px 2px)"></div>
<!-- ================= RIGHT PANEL ================= -->
<div id="right" class="abs panel">
<div class="abs phead"><span class="abs" style="left:30px;top:0">Panel funkcí</span></div>
<div class="abs btn" style="left:4px;top:5px;width:20px;height:20px"><svg style="left:6px;top:4px" width="8" height="10" viewBox="0 0 8 10"><path d="M1 0.5 L1 9.5 L7 5Z" fill="#3c3c3c"/></svg></div>
<div class="abs rl" style="top:35px">Rodinní příslušníci</div>
<div class="abs rl" style="top:55px">Adresy</div>
<div class="abs rl" style="top:75px">Kvalifikace</div>
<div class="abs rl" style="top:95px">Kurzy</div>
<div class="abs rl" style="top:114px">Školy</div>
<div class="abs rl" style="top:134px">Zaměstnání</div>
<div class="abs rl" style="top:154px">Důchody</div>
<div class="abs rl" style="top:174px">Invalidity</div>
<div class="abs rl" style="top:194px">Konta zaměstnanců</div>
<div class="abs rl" style="top:213px">Oznámení ZP</div>
<div class="abs btn rb" style="top:241px;height:19px"><i class="abs" style="left:0;top:0;width:8px;height:17px;background:#2bea2b;border-radius:4px 0 0 4px"></i>Pracovní poměry</div>
<div class="abs btn rb" style="top:265px;height:19px">Filtr na střediska</div>
<div class="abs btn rb" style="top:563px;height:21px;line-height:19px">Funkce</div>
</div>
<!-- ================= BOTTOM BAR ================= -->
<div class="abs btn bb" style="left:187px;width:66px"><svg style="left:7px;top:3px" width="12" height="12" viewBox="0 0 12 12"><path d="M4.2 0 H7.8 V4.2 H12 V7.8 H7.8 V12 H4.2 V7.8 H0 V4.2 H4.2Z" fill="#2e2e2e"/></svg><i class="sep" style="left:25px"></i><span class="lbl" style="left:30px">Přidej</span></div>
<div class="abs btn bb" style="left:258px;width:67px"><svg style="left:7px;top:3px" width="12" height="12" viewBox="0 0 12 12"><path d="M0 12 L1 8.5 L8.5 1 L11 3.5 L3.5 11Z" fill="#3a3a3a"/></svg><i class="sep" style="left:25px"></i><span class="lbl" style="left:30px">Edituj</span></div>
<div class="abs btn bb" style="left:330px;width:68px;border-color:#c24a4a;box-shadow:inset 0 0 0 1px rgba(255,255,255,.55),0 0 0 .5px #c24a4a"><svg style="left:9px;top:4px" width="11" height="10" viewBox="0 0 11 10"><path d="M1 0.5 L10 9.5 M10 0.5 L1 9.5" stroke="#222" stroke-width="2.2"/></svg><span class="lbl" style="left:34px">Zruš</span></div>
<div class="abs st" style="left:1014px">Ozn: 1</div>
<div class="abs st" style="left:1073px">Řad: 8</div>
<div class="abs st" style="left:1131px">Tot: 13</div>
<div class="abs" style="left:1188px;top:704px;width:35px;height:19px;background:#fff;border:1px solid #bdbdbd;border-radius:4px;text-align:right;padding-right:3px;font-size:12px;letter-spacing:-.3px;line-height:18px">200</div>
<div class="abs btn bb" style="left:426px;width:26px"><svg style="left:7px;top:3px" width="12" height="12" viewBox="0 0 12 12"><rect x="0.5" y="0.5" width="10" height="2.4" fill="#f4f4f4" stroke="#555" stroke-width=".8"/><rect x="2" y="5" width="9.6" height="2.2" fill="#333"/><rect x="4" y="9" width="7.6" height="2.2" fill="#333"/></svg></div>
<div class="abs btn bb" style="left:456px;width:26px"><svg style="left:6px;top:3px" width="13" height="13" viewBox="0 0 13 13"><rect x="0.5" y="0.5" width="12" height="2.6" fill="#f4f4f4" stroke="#444" stroke-width="1"/><path d="M3 3.4 L10 7.6 L7.2 8.2 L9 11.8 L7.6 12.5 L5.8 8.9 L3.6 10.8Z" fill="#222"/></svg></div>
<div class="abs btn bb" style="left:485px;width:26px;text-align:center;font-weight:bold;font-size:14.5px;line-height:18px;letter-spacing:0;color:#2a2a2a"><span style="display:inline-block;transform:scale(1.3,1)">Σ</span></div>
<div class="abs btn bb" style="left:515px;width:26px"><svg style="left:6px;top:2px" width="13" height="14" viewBox="0 0 13 14"><ellipse cx="6.5" cy="7" rx="4.6" ry="4.8" stroke="#2a2a2a" stroke-width="1.7" fill="none"/><path d="M2 12.6 L11 1.4" stroke="#2a2a2a" stroke-width="1.4"/></svg></div>
<div class="abs btn bb" style="left:545px;width:26px"><svg style="left:7px;top:3px" width="11" height="12" viewBox="0 0 11 12"><rect x="0.8" y="0.8" width="9.4" height="10.4" rx="1.4" fill="#f6f6f6" stroke="#333" stroke-width="1.4"/><rect x="0.8" y="0.8" width="9.4" height="2.8" fill="#333"/></svg></div>
<div class="abs btn bb" style="left:585px;width:26px"><svg style="left:6px;top:3px" width="13" height="12" viewBox="0 0 13 12"><path d="M1 6 V0.8 H11 V5" stroke="#333" stroke-width="1.4" fill="none"/><circle cx="6" cy="5.6" r="3.3" stroke="#333" stroke-width="1.4" fill="#f4f4f4"/><path d="M8.4 8 L11.6 11.4" stroke="#333" stroke-width="1.8"/></svg></div>
<div class="abs btn bb" style="left:615px;width:26px"><svg style="left:6px;top:3px" width="13" height="12" viewBox="0 0 13 12"><path d="M0.5 0.5 H12.5 V8 H5.4 L2.4 11.4 V8 H0.5Z" fill="#333"/><rect x="2.6" y="3" width="7.8" height="1.6" fill="#cfcfcf"/></svg></div>
<div class="abs dark bb" style="left:645px;width:26px;text-align:center;color:#fff;font-family:'Liberation Serif',serif;font-style:italic;font-weight:bold;font-size:17px;line-height:17px;letter-spacing:0">i</div>
</body></html>
